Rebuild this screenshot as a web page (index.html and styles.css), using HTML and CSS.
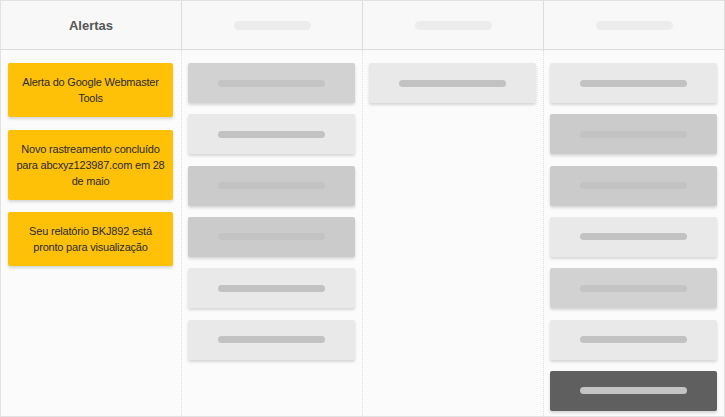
FILE: index.html
```html
<!DOCTYPE html>
<html lang="en">
<head>
  <meta charset="UTF-8">
  <title>Alertas</title>
  <link rel="stylesheet" href="styles.css">
</head>
<body>

  <div class="board">
    <!-- Headers -->
    <div class="board-head">
      <div class="head-cell"><span class="title">Alertas</span></div>
      <div class="head-cell"><span class="head-bar"></span></div>
      <div class="head-cell"><span class="head-bar"></span></div>
      <div class="head-cell"><span class="head-bar"></span></div>
    </div>

    <!-- Columns -->
    <div class="board-body">
      <div class="column alerts">
        <div class="alert">Alerta do Google Webmaster Tools</div>
        <div class="alert">Novo rastreamento concluído para abcxyz123987.com em 28 de maio</div>
        <div class="alert">Seu relatório BKJ892 está pronto para visualização</div>
      </div>

      <div class="column">
        <div class="tile mid"><span class="bar"></span></div>
        <div class="tile light"><span class="bar"></span></div>
        <div class="tile dark"><span class="bar"></span></div>
        <div class="tile dark"><span class="bar"></span></div>
        <div class="tile light"><span class="bar"></span></div>
        <div class="tile light"><span class="bar"></span></div>
      </div>

      <div class="column">
        <div class="tile light"><span class="bar"></span></div>
      </div>

      <div class="column">
        <div class="tile light"><span class="bar"></span></div>
        <div class="tile dark"><span class="bar"></span></div>
        <div class="tile dark"><span class="bar"></span></div>
        <div class="tile light"><span class="bar"></span></div>
        <div class="tile mid"><span class="bar"></span></div>
        <div class="tile light"><span class="bar"></span></div>
        <div class="tile black"><span class="bar"></span></div>
      </div>
    </div>
  </div>

</body>
</html>
```

FILE: styles.css
```css
body {
  margin: 0;
  padding: 0;
  font-family: 'Liberation Sans', Arial, sans-serif;
  background-color: #ffffff;
}

.board {
  width: 725px;
  height: 417px;
  box-sizing: border-box;
  border: 1px solid #e2e2e2;
  display: flex;
  flex-direction: column;
  background-color: #fbfbfb;
}

/* Header row */
.board-head {
  display: grid;
  grid-template-columns: 181px 181px 181px 1fr;
  height: 48px;
  border-bottom: 1px solid #dcdcdc;
  background-color: #f8f8f8;
  flex-shrink: 0;
}
.head-cell {
  display: flex;
  align-items: center;
  justify-content: center;
  border-right: 1px solid #dcdcdc;
}
.head-cell:last-child {
  border-right: none;
}
.title {
  font-size: 13px;
  font-weight: bold;
  color: #555555;
}
.head-bar {
  display: block;
  width: 77px;
  height: 9px;
  border-radius: 5px;
  background-color: #ececec;
}

/* Body columns */
.board-body {
  flex: 1;
  display: grid;
  grid-template-columns: 181px 181px 181px 1fr;
  overflow: hidden;
}
.column {
  display: flex;
  flex-direction: column;
  gap: 11.33px;
  padding: 13px 7px 0 6px;
  border-right: 1px dotted #dddddd;
}
.column:last-child {
  border-right: none;
}
.column.alerts {
  gap: 12.5px;
  padding-left: 7px;
  padding-right: 8px;
}

.alert {
  background-color: #ffc107;
  color: #2a2a2a;
  font-size: 11px;
  letter-spacing: -0.2px;
  line-height: 16px;
  text-align: center;
  padding: 11px 6px;
  border-radius: 2px;
  box-shadow: 0 2px 3px rgba(0, 0, 0, 0.15);
}

.tile {
  height: 40px;
  display: flex;
  align-items: center;
  justify-content: center;
  border-radius: 2px;
  box-shadow: 0 2px 3px rgba(0, 0, 0, 0.15);
  flex-shrink: 0;
}
.tile .bar {
  display: block;
  width: 107px;
  height: 7px;
  border-radius: 4px;
  background-color: #c2c2c2;
}
.tile.light { background-color: #e9e9e9; }
.tile.mid { background-color: #d2d2d2; }
.tile.mid .bar { background-color: #c4c4c4; }
.tile.dark { background-color: #cbcbcb; }
.tile.dark .bar { background-color: #c3c3c3; }
.tile.black { background-color: #5f5f5f; }
.tile.black .bar { background-color: #c4c4c4; }
```
